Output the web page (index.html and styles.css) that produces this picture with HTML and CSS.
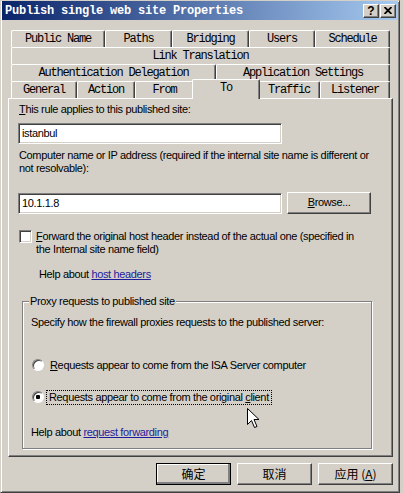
FILE: index.html
```html
<!DOCTYPE html>
<html>
<head>
<meta charset="utf-8">
<link rel="stylesheet" href="styles.css">
</head>
<body>
<div class="win">
  <div class="titlebar">
    <span class="title">Publish single web site Properties</span>
    <div class="tbtns">
      <span class="tbtn">?</span>
      <span class="tbtn x"><svg width="8" height="7" viewBox="0 0 8 7"><path d="M0.5 0 L7.5 7 M7.5 0 L0.5 7" stroke="#000" stroke-width="1.8"/></svg></span>
    </div>
  </div>
  <div class="tabs">
    <div class="tabrow r1">
      <div class="tab">Public Name</div>
      <div class="tab">Paths</div>
      <div class="tab">Bridging</div>
      <div class="tab">Users</div>
      <div class="tab">Schedule</div>
    </div>
    <div class="tabrow r2">
      <div class="tab">Link Translation</div>
    </div>
    <div class="tabrow r3">
      <div class="tab">Authentication Delegation</div>
      <div class="tab">Application Settings</div>
    </div>
    <div class="tabrow r4">
      <div class="tab">General</div>
      <div class="tab">Action</div>
      <div class="tab">From</div>
      <div class="tab sel">To</div>
      <div class="tab">Traffic</div>
      <div class="tab">Listener</div>
    </div>
  </div>
  <div class="panel">
    <div class="lbl"><u>T</u>his rule applies to this published site:</div>
    <div class="edit e1">istanbul</div>
    <div class="lbl l2">Computer name or IP address (required if the internal site name is different or<br>not resolvable):</div>
    <div class="row ipr">
      <div class="edit e2">10.1.1.8</div>
      <div class="btn browse"><u>B</u>rowse...</div>
    </div>
    <div class="chkrow">
      <span class="chk"></span>
      <div class="chktxt"><u>F</u>orward the original host header instead of the actual one (specified in<br>the Internal site name field)</div>
    </div>
    <div class="help h1">Help about <a class="lnk">host headers</a></div>
    <fieldset class="grp">
      <legend>Proxy requests to published site</legend>
      <div class="spec">Specify how the firewall proxies requests to the published server:</div>
      <div class="radrow r-a"><span class="rad"></span><span class="radtxt"><u>R</u>equests appear to come from the ISA Server computer</span></div>
      <div class="radrow r-b"><span class="rad on"></span><span class="radtxt focus">Requests appear to come from the original <u>c</u>lient</span></div>
      <div class="help h2">Help about <a class="lnk">request forwarding</a></div>
    </fieldset>
  </div>
  <div class="btnrow">
    <div class="btn dlg def">确定</div>
    <div class="btn dlg">取消</div>
    <div class="btn dlg">应用 (<u>A</u>)</div>
  </div>
</div>
<svg class="cursor" width="13" height="22" viewBox="0 0 13 22">
  <path d="M0.5 0.5 L0.5 16.5 L4.5 12.5 L7.5 19.5 L10 18.5 L7 11.5 L12 11.5 Z" fill="#fff" stroke="#000" stroke-width="1"/>
</svg>
</body>
</html>
```

FILE: styles.css
```css
* { box-sizing: border-box; }
html, body { margin: 0; padding: 0; background: #d4d0c8; }
body {
  width: 403px; height: 493px; overflow: hidden; position: relative;
  font-family: "Liberation Sans", Arial, sans-serif; font-size: 11px; color: #000;
}
.win {
  width: 400px; height: 493px;
  border-left: 1px solid #d4d0c8; border-top: 1px solid #d4d0c8;
  border-right: 1px solid #404040; border-bottom: 1px solid #404040;
  box-shadow: inset 1px 1px #fff, inset -1px -1px #808080;
  padding: 0 2px 2px 1px;
  display: flex; flex-direction: column;
}
.titlebar {
  height: 19px; margin-right: -1px;
  background: linear-gradient(to right, #0a246a, #a6caf0);
  display: flex; align-items: center; justify-content: space-between;
  padding: 0 2px 0 3px;
}
.title {
  color: #fff; font-family: "Liberation Mono", monospace; font-weight: bold;
  font-size: 12px; letter-spacing: -0.2px; line-height: 14px;
}
.tbtns { display: flex; gap: 1px; }
.tbtn {
  width: 16px; height: 14px; background: #d4d0c8;
  border-top: 1px solid #fff; border-left: 1px solid #fff;
  border-right: 1px solid #404040; border-bottom: 1px solid #404040;
  box-shadow: inset -1px -1px #808080;
  font-family: "Liberation Sans", Arial, sans-serif; font-weight: bold; font-size: 12px;
  line-height: 12px; text-align: center; color: #000;
  display: flex; align-items: center; justify-content: center;
}
.tbtn.x { padding-bottom: 1px; }
.tabs { margin: 10px 0 0 9px; width: 379px; }
.tabrow { display: grid; height: 17px; }
.r1 { grid-template-columns: 94px 67px 77px 66px 75px; }
.r2 { grid-template-columns: 379px; }
.r3 { grid-template-columns: 205px 174px; }
.r4 { grid-template-columns: 66px 58px 59px 64px 62px 70px; }
.tab {
  border-top: 1px solid #fff; border-left: 1px solid #fff;
  border-right: 1px solid #404040;
  box-shadow: inset -1px 0 #808080;
  border-radius: 2px 2px 0 0;
  text-align: center;
  font-family: "Liberation Mono", monospace; font-size: 12px; letter-spacing: -1.2px;
  line-height: 15px; padding-top: 1px; white-space: nowrap;
  background: #d4d0c8;
}
.tab.sel {
  margin: -2px -2px -1px -2px; position: relative; z-index: 1;
  line-height: 15px; padding-top: 1px;
}
.panel {
  margin-left: 6px; width: 385px; height: 359px;
  border-top: 1px solid #fff; border-left: 1px solid #fff;
  border-right: 1px solid #404040; border-bottom: 1px solid #404040;
  box-shadow: inset -1px -1px #808080;
  padding: 4px 10px 0 10px;
  line-height: 13px; letter-spacing: -0.35px;
}
.lbl { white-space: nowrap; }
.edit {
  background: #fff; height: 21px;
  border-top: 1px solid #808080; border-left: 1px solid #808080;
  border-right: 1px solid #fff; border-bottom: 1px solid #fff;
  box-shadow: inset 1px 1px #404040, inset -1px -1px #d4d0c8;
  padding: 3px 0 0 3px; line-height: 13px;
}
.e1 { margin: 7px 0 0 -1px; width: 264px; }
.l2 { margin-top: 5px; }
.row { display: flex; align-items: flex-start; }
.ipr { margin: 18px 0 0 -1px; gap: 5px; }
.e2 { width: 264px; }
.btn {
  background: #d4d0c8; text-align: center;
  border-top: 1px solid #fff; border-left: 1px solid #fff;
  border-right: 1px solid #404040; border-bottom: 1px solid #404040;
  box-shadow: inset -1px -1px #808080;
}
.browse { width: 84px; height: 22px; margin-top: -1px; line-height: 19px; }
.chkrow { margin-top: 16px; display: flex; gap: 4px; }
.chk {
  width: 13px; height: 13px; background: #fff; flex: none;
  border-top: 1px solid #808080; border-left: 1px solid #808080;
  border-right: 1px solid #fff; border-bottom: 1px solid #fff;
  box-shadow: inset 1px 1px #404040, inset -1px -1px #d4d0c8;
}
.chktxt { white-space: nowrap; }
.help { white-space: nowrap; }
.h1 { margin-top: 12px; padding-left: 20px; }
.lnk { color: #1c1c9c; text-decoration: underline; }
.grp {
  margin: 14px 0 0 3px; width: 350px; padding: 0 8px 9px 8px;
  border: 1px solid #808080; box-shadow: inset 1px 1px #fff, 1px 1px #fff;
  min-width: 0;
}
.grp legend { padding: 0 1px; margin-left: -2px; background: #d4d0c8; line-height: 13px; }
.spec { margin-top: 8px; white-space: nowrap; }
.radrow { display: flex; align-items: center; gap: 5px; margin-left: 1px; white-space: nowrap; height: 14px; }
.r-a { margin-top: 29px; }
.r-b { margin-top: 18px; }
.rad {
  width: 12px; height: 12px; border-radius: 50%; background: #fff; flex: none;
  border: 1px solid; border-color: #808080 #fff #fff #808080;
  box-shadow: inset 1px 1px #404040;
}
.rad.on { background: radial-gradient(circle, #000 0 2px, #fff 2.5px); }
.radtxt { padding: 0 1px; }
.radtxt.focus { outline: 1px dotted #000; margin-left: -2px; padding: 0 2px; }
.h2 { margin-top: 22px; }
.btnrow { margin: 6px 0 0 6px; width: 385px; display: flex; justify-content: flex-end; gap: 6px; letter-spacing: 0; }
.dlg {
  width: 75px; height: 22px; line-height: 19px;
  font-family: "Noto Sans CJK SC", sans-serif; font-size: 12px;
}
.dlg.def { outline: 1px solid #000; outline-offset: -1px; box-shadow: inset -2px -2px #808080, inset 1px 1px #fff; }
.cursor { position: absolute; left: 247px; top: 408px; }
```
